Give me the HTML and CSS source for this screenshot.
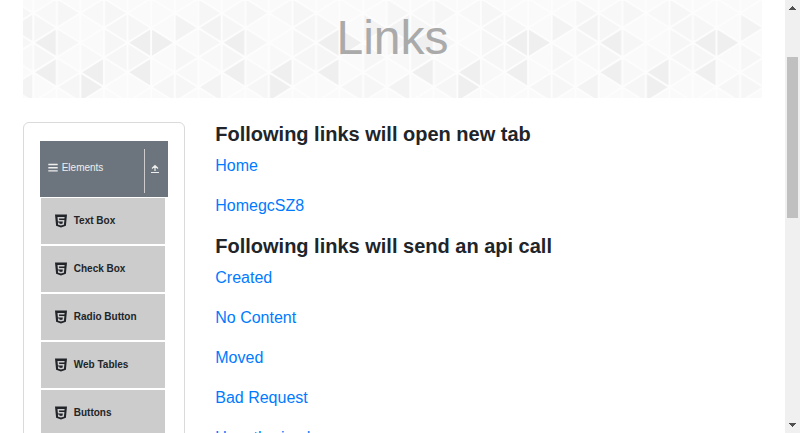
FILE: index.html
```
<!DOCTYPE html>
<html lang="en">
<head>
<meta charset="utf-8">
<title>Links</title>
<link rel="stylesheet" href="styles.css">
</head>
<body>
<svg class="defs" width="0" height="0" aria-hidden="true">
  <symbol id="html5" viewBox="0 0 12 14"><path fill="currentColor" fill-rule="evenodd" d="M0 .5h12l-1.100 11.200L6 13.500l-4.900-1.800zM2.500 3l.4 4.500h4.900l-.2 2-1.600.5-1.600-.5-.1-1H2.900l.2 2.200 2.900.9 2.900-.9.5-4.600H4.200L4 4.500h5.400L9.600 3z"/></symbol>
</svg>
<div class="window">
  <main class="page">
    <header class="banner">
      <svg class="pattern" width="739" height="98" aria-hidden="true">
        <defs>
          <path id="l" d="M0 0L23.560-14.800V14.800z"/>
          <path id="r" d="M0-14.800L23.560 0L0 14.800z"/>
          <pattern id="tri" x="10.300" y="0" width="188.480" height="98" patternUnits="userSpaceOnUse">
            <rect width="189" height="98" fill="#fafafa"/>
            <g fill="#f6f6f6">
              <use href="#r" x="0" y="27.900"/><use href="#r" x="0" y="57.500"/>
              <use href="#r" x="23.560" y="13.100"/><use href="#r" x="23.560" y="42.700"/><use href="#l" x="23.560" y="87.100"/>
              <use href="#r" x="70.680" y="13.100"/><use href="#l" x="70.680" y="27.900"/><use href="#r" x="70.680" y="42.700"/><use href="#l" x="70.680" y="57.500"/>
              <use href="#r" x="94.240" y="27.900"/><use href="#r" x="94.240" y="57.500"/>
              <use href="#l" x="117.800" y="87.100"/>
              <use href="#r" x="141.360" y="57.500"/><use href="#r" x="141.360" y="87.100"/>
              <use href="#r" x="164.920" y="42.700"/><use href="#r" x="164.920" y="13.100"/>
            </g>
            <g fill="#f8f8f8">
              <use href="#l" x="0" y="13.100"/><use href="#r" x="23.560" y="72.300"/>
              <use href="#l" x="47.120" y="13.100"/><use href="#r" x="47.120" y="57.500"/><use href="#r" x="70.680" y="72.300"/>
              <use href="#l" x="141.360" y="72.300"/><use href="#l" x="164.920" y="57.500"/>
            </g>
            <g fill="#f3f3f3">
              <use href="#r" x="141.360" y="27.900"/><use href="#l" x="164.920" y="27.900"/><use href="#l" x="164.920" y="87.100"/>
            </g>
            <g fill="#efefef">
              <use href="#l" x="0" y="42.700"/><use href="#l" x="0" y="72.300"/>
              <use href="#l" x="47.120" y="72.300"/><use href="#r" x="47.120" y="87.100"/>
              <use href="#l" x="94.240" y="42.700"/><use href="#r" x="117.800" y="42.700"/><use href="#l" x="94.240" y="72.300"/>
            </g>
            <path fill="none" stroke="#fdfdfd" stroke-width="2" d="M0 0V98M23.560 0V98M47.120 0V98M70.680 0V98M94.240 0V98M117.800 0V98M141.360 0V98M164.920 0V98M188.480 0V98
              M0-16.500L188.480 101.900M0-46.100L188.480 72.300M0-75.700L188.480 42.700M0-105.300L188.480 13.100M0 13.100L188.480 131.500M0 42.700L188.480 161.100M0 72.300L188.480 190.700
              M0 13.100L188.480-105.300M0 42.700L188.480-75.700M0 72.300L188.480-46.100M0 101.900L188.480-16.500M0 131.500L188.480 13.100M0 161.100L188.480 42.700M0 190.700L188.480 72.300"/>
          </pattern>
        </defs>
        <rect width="739" height="98" fill="url(#tri)"/>
      </svg>
      <h1 class="title">Links</h1>
    </header>
    <div class="columns">
      <aside class="card">
        <div class="group">
          <svg class="bars" viewBox="0 0 10 9"><path d="M.3 1.500h9.400M.3 4.700h9.400M.3 7.900h9.400" stroke="currentColor" stroke-width="1.400"/></svg>
          <span>Elements</span>
          <span class="toggle">
            <svg viewBox="0 0 8 9" width="8" height="9"><path d="M0 8.500h8M4 7V2M1 4.500L4 1.500l3 3" fill="none" stroke="currentColor" stroke-width="1.200"/></svg>
          </span>
        </div>
        <ul class="menu">
          <li><svg><use href="#html5"/></svg><span>Text Box</span></li>
          <li><svg><use href="#html5"/></svg><span>Check Box</span></li>
          <li><svg><use href="#html5"/></svg><span>Radio Button</span></li>
          <li><svg><use href="#html5"/></svg><span>Web Tables</span></li>
          <li><svg><use href="#html5"/></svg><span>Buttons</span></li>
        </ul>
      </aside>
      <section class="links">
        <h2>Following links will open new tab</h2>
        <p><a>Home</a></p>
        <p><a>HomegcSZ8</a></p>
        <h2>Following links will send an api call</h2>
        <p><a>Created</a></p>
        <p><a>No Content</a></p>
        <p><a>Moved</a></p>
        <p><a>Bad Request</a></p>
        <p><a>Unauthorized</a></p>
      </section>
    </div>
  </main>
  <div class="scrollbar">
    <svg width="7" height="4" shape-rendering="crispEdges"><path fill="#505050" d="M3 0h1v1h1v1h1v1h1v1H0V3h1V2h1V1h1z"/></svg>
    <div class="thumb"></div>
    <svg class="down" width="7" height="4" shape-rendering="crispEdges"><path fill="#505050" d="M0 0h7v1H6v1H5v1H4v1H3V3H2V2H1V1H0z"/></svg>
  </div>
</div>
</body>
</html>
```
FILE: styles.css
```
* { box-sizing: border-box; }
body {
  margin: 0;
  overflow: hidden;
  background: #fff;
  color: #212529;
  font: 16px/24px "Liberation Sans", Arial, sans-serif;
}
h1, h2, p, ul { margin: 0; padding: 0; }
svg { display: block; flex: none; }
.defs { position: absolute; }
.window { display: flex; height: 433px; overflow: hidden; }
.page { width: 785px; padding: 0 23px; }
.banner { display: grid; width: 739px; height: 98px; }
.pattern, .title { grid-area: 1 / 1; }
.title {
  z-index: 1;
  padding-top: 9px;
  font-size: 48px;
  line-height: 57px;
  font-weight: 400;
  color: #aaa;
  text-align: center;
}
.columns { display: flex; align-items: flex-start; gap: 30.25px; margin-top: 24px; }
.card {
  width: 162px;
  height: 500px;
  padding: 18px 16px;
  border: 1px solid #dadada;
  border-radius: 6px;
}
.group {
  display: flex;
  align-items: center;
  width: 128px;
  height: 56px;
  padding: 0 9px 0 8px;
  background: #6c757d;
  color: #eee;
  font-size: 10px;
  line-height: 12px;
}
.bars { width: 10px; height: 9px; margin: -3px 3.7px 0 0; }
.group > span:not(.toggle) { padding-bottom: 2px; }
.toggle {
  display: flex;
  align-items: center;
  height: 44px;
  margin: 4px 0 0 auto;
  padding-left: 6px;
  border-left: 1px solid #ccc;
}
.toggle svg { margin-top: -5px; }
.menu { width: 124px; margin: 1px 0 0 1px; list-style: none; }
.menu li {
  display: flex;
  align-items: center;
  height: 46px;
  margin-bottom: 2px;
  padding: 0 14px;
  background: #ccc;
  font-size: 10px;
  font-weight: 700;
  line-height: 12px;
}
.menu svg { width: 12px; height: 14px; margin: 0 6.75px 0 0; }
.menu span { padding-bottom: 1px; }
.links h2 { font-size: 20px; line-height: 24px; margin-bottom: 8px; }
.links p { margin-bottom: 16px; }
.links a { color: #007bff; }
.scrollbar {
  display: flex;
  flex-direction: column;
  align-items: center;
  width: 15px;
  padding: 6px 0;
  background: #f0f0f0;
}
.thumb { width: 11px; height: 161px; margin-top: 47px; background: #c0c0c0; }
.down { margin-top: auto; }
```
